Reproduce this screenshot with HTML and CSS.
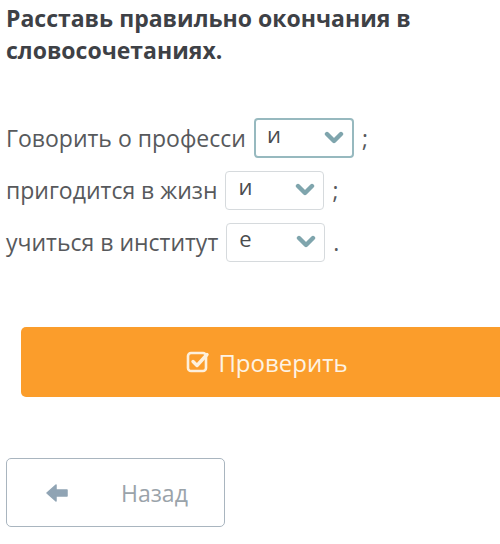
FILE: index.html
```html
<!DOCTYPE html>
<html lang="ru">
<head>
<meta charset="utf-8">
<link rel="stylesheet" href="styles.css">
</head>
<body>
<div class="page">
  <h1 class="title">Расставь правильно окончания в словосочетаниях.</h1>
  <div class="rows">
    <div class="row">
      <span class="word">Говорить о професси</span>
      <span class="select focused"><span class="val">и</span><svg class="chev" viewBox="0 0 20 14" width="20" height="14"><path d="M3 3 L10 10 L17 3" fill="none" stroke="#7fa5ad" stroke-width="4.4" stroke-linecap="round" stroke-linejoin="round"/></svg></span>
      <span class="punct">;</span>
    </div>
    <div class="row">
      <span class="word">пригодится в жизн</span>
      <span class="select"><span class="val">и</span><svg class="chev" viewBox="0 0 20 14" width="20" height="14"><path d="M3 3 L10 10 L17 3" fill="none" stroke="#7fa5ad" stroke-width="4.4" stroke-linecap="round" stroke-linejoin="round"/></svg></span>
      <span class="punct">;</span>
    </div>
    <div class="row">
      <span class="word">учиться в институт</span>
      <span class="select"><span class="val">е</span><svg class="chev" viewBox="0 0 20 14" width="20" height="14"><path d="M3 3 L10 10 L17 3" fill="none" stroke="#7fa5ad" stroke-width="4.4" stroke-linecap="round" stroke-linejoin="round"/></svg></span>
      <span class="punct">.</span>
    </div>
  </div>
  <div class="check-wrap">
    <button class="check"><svg class="checkicon" viewBox="0 0 24 24" width="24" height="24"><rect x="2" y="3" width="18" height="18" rx="3" fill="none" stroke="#fdf0dc" stroke-width="2.6"/><path d="M7 11.5 L11 15.5 L21 4.5" fill="none" stroke="#fdf0dc" stroke-width="3.4" stroke-linecap="round" stroke-linejoin="round"/></svg><span>Проверить</span></button>
  </div>
  <button class="back"><svg class="arrow" viewBox="0 0 24 20" width="24" height="20"><path d="M2 10 L11 2 L11 7 L22 7 L22 13 L11 13 L11 18 Z" fill="#90a4b4" stroke="#90a4b4" stroke-width="1.5" stroke-linejoin="round"/></svg><span>Назад</span></button>
</div>
</body>
</html>
```
FILE: styles.css
```css
html, body {
  margin: 0;
  padding: 0;
  background: #ffffff;
}
.page {
  font-family: "Open Sans", "Noto Sans", sans-serif;
  padding: 0 0 0 6px;
  width: 494px;
  overflow: hidden;
}
.title {
  margin: 0;
  padding-top: 2px;
  font-size: 23px;
  line-height: 32px;
  font-weight: 700;
  color: #3e4146;
  width: 440px;
}
.rows {
  margin-top: 52px;
  display: flex;
  flex-direction: column;
  gap: 12px;
}
.row {
  display: flex;
  align-items: center;
  height: 40px;
  font-size: 23px;
  color: #57595c;
}
.word {
  margin-right: 8px;
}
.select {
  box-sizing: border-box;
  width: 99px;
  height: 39px;
  border: 1px solid #d6dadd;
  border-radius: 4px;
  display: flex;
  align-items: center;
  justify-content: space-between;
  padding: 0 8px 0 12px;
  font-size: 22px;
  color: #4a4c4f;
}
.select.focused {
  border: 2px solid #97b9bf;
  width: 100px;
  height: 40px;
  padding-left: 11px;
}
.val {
  line-height: 1;
  margin-top: -8px;
}
.punct {
  margin-left: 8px;
  color: #57595c;
}
.check-wrap {
  margin-top: 65px;
  padding-left: 15px;
}
.check {
  box-sizing: border-box;
  width: 492px;
  height: 70px;
  border: none;
  border-radius: 5px;
  background: #fb9d2b;
  color: #fdf3e4;
  font-family: "Open Sans", "Noto Sans", sans-serif;
  font-size: 24px;
  display: flex;
  align-items: center;
  justify-content: center;
  gap: 8px;
  padding: 0;
}
.back {
  margin-top: 61px;
  box-sizing: border-box;
  width: 219px;
  height: 69px;
  border: 1.5px solid #a9b5bf;
  border-radius: 5px;
  background: #fff;
  color: #9aa3aa;
  font-family: "Open Sans", "Noto Sans", sans-serif;
  font-size: 23px;
  display: flex;
  align-items: center;
  padding: 0 0 0 38px;
  gap: 52px;
}
```
